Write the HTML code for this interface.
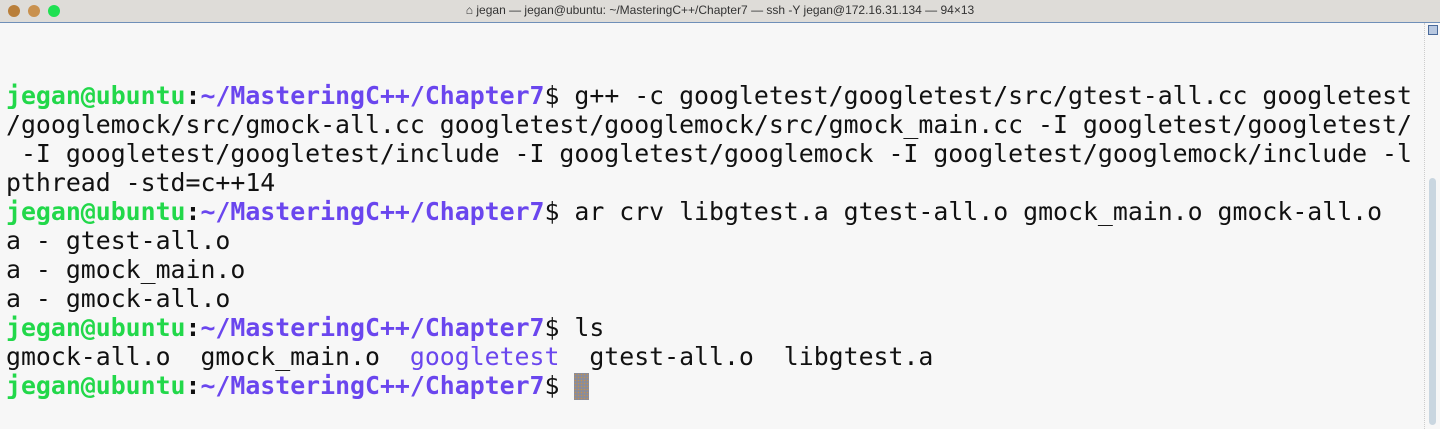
<!DOCTYPE html>
<html><head><style>
html,body{margin:0;padding:0;width:1440px;height:429px;overflow:hidden;background:#f7f7f7;}
.tb{position:absolute;left:0;top:0;width:1440px;height:22px;background:#dedcd8;border-bottom:1px solid #6f8fb8;}
.dot{position:absolute;top:5px;width:12px;height:12px;border-radius:50%;}
.title{position:absolute;left:0;right:0;top:3px;text-align:center;font:12px "Liberation Sans",sans-serif;color:#333;}
pre{position:absolute;left:6px;top:23px;margin:0;font:24.85px/29px "DejaVu Sans Mono",monospace;color:#111;}
.g{color:#22d84a;font-weight:bold}.p{color:#6a46ee;font-weight:bold}.c{font-weight:bold}
.b{color:#6a46ee}
.cur{display:inline-block;width:15px;height:27px;background:#8a8c9a;vertical-align:-6px;background-image:radial-gradient(#c8914a 30%,transparent 40%);background-size:3px 3px;}
.sb{position:absolute;left:1424px;top:23px;width:16px;height:406px;border-left:1px dotted #ccc;}
.th{position:absolute;left:1429px;top:178px;width:7px;height:247px;background:#c9d6e0;border-radius:4px;}
.sq{position:absolute;left:1428px;top:25px;width:8px;height:8px;border:1px solid #4a6a9a;background:#b8c8e0;}
</style></head><body>
<div class="tb">
<div class="dot" style="left:8px;background:#b97f3a"></div>
<div class="dot" style="left:28px;background:#c9914e"></div>
<div class="dot" style="left:48px;background:#1fe052"></div>
<div class="title">⌂ jegan — jegan@ubuntu: ~/MasteringC++/Chapter7 — ssh -Y jegan@172.16.31.134 — 94×13</div>
</div>
<pre>


<span class="g">jegan@ubuntu</span><span class="c">:</span><span class="p">~/MasteringC++/Chapter7</span>$ g++ -c googletest/googletest/src/gtest-all.cc googletest
/googlemock/src/gmock-all.cc googletest/googlemock/src/gmock_main.cc -I googletest/googletest/
 -I googletest/googletest/include -I googletest/googlemock -I googletest/googlemock/include -l
pthread -std=c++14
<span class="g">jegan@ubuntu</span><span class="c">:</span><span class="p">~/MasteringC++/Chapter7</span>$ ar crv libgtest.a gtest-all.o gmock_main.o gmock-all.o
a - gtest-all.o
a - gmock_main.o
a - gmock-all.o
<span class="g">jegan@ubuntu</span><span class="c">:</span><span class="p">~/MasteringC++/Chapter7</span>$ ls
gmock-all.o  gmock_main.o  <span class="b">googletest</span>  gtest-all.o  libgtest.a
<span class="g">jegan@ubuntu</span><span class="c">:</span><span class="p">~/MasteringC++/Chapter7</span>$ <span class="cur"></span></pre>
<div class="sb"></div><div class="sq"></div><div class="th"></div>
</body></html>
